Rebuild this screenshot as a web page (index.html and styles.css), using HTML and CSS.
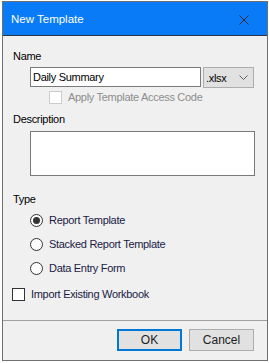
FILE: index.html
```html
<!DOCTYPE html>
<html>
<head>
    <title>New Template</title>
    <link rel="stylesheet" href="styles.css">
</head>
<body>
    <div class="window">
        <div class="titlebar">
            <span class="title">New Template</span>
            <svg class="close" width="10" height="10" viewBox="0 0 10 10">
                <path d="M0.5 0.5 L9.5 9.5 M9.5 0.5 L0.5 9.5" stroke="#1c2a3a" stroke-width="1" fill="none"/>
            </svg>
        </div>
        <div class="content">
            <div class="label">Name</div>
            <div class="nameRow">
                <div class="textbox">Daily Summary</div>
                <div class="combo">
                    <span>.xlsx</span>
                    <svg width="9" height="5" viewBox="0 0 9 5">
                        <path d="M0.5 0.5 L4.5 4.5 L8.5 0.5" stroke="#606060" stroke-width="1" fill="none"/>
                    </svg>
                </div>
            </div>
            <div class="checkRow accessRow disabled">
                <span class="check"></span>
                <span>Apply Template Access Code</span>
            </div>
            <div class="label descLabel">Description</div>
            <div class="textarea"></div>
            <div class="label typeLabel">Type</div>
            <div class="radios">
                <div class="radioRow"><span class="radio checked"></span><span>Report Template</span></div>
                <div class="radioRow"><span class="radio"></span><span>Stacked Report Template</span></div>
                <div class="radioRow"><span class="radio"></span><span>Data Entry Form</span></div>
            </div>
            <div class="checkRow importRow">
                <span class="check"></span>
                <span>Import Existing Workbook</span>
            </div>
        </div>
        <div class="footer">
            <div class="button default">OK</div>
            <div class="button">Cancel</div>
        </div>
    </div>
</body>
</html>
```

FILE: styles.css
```css
body {
    margin: 0;
    background: #ffffff;
    font-family: "Liberation Sans", Arial, sans-serif;
    font-size: 11px;
    letter-spacing: -0.3px;
    color: #000;
}
.window {
    margin: 1px 0 0 2px;
    width: 266px;
    height: 360px;
    box-sizing: border-box;
    border: 1px solid #707070;
    background: #f0f0f0;
    display: flex;
    flex-direction: column;
}
.titlebar {
    height: 33px;
    flex: none;
    border-bottom: 1px solid #2a3444;
    background: #0a7bf6;
    display: flex;
    align-items: center;
    justify-content: space-between;
    padding: 0 18px 0 8px;
}
.title {
    color: #fff;
    font-size: 11.5px;
    letter-spacing: 0;
}
.close {
    display: block;
    margin-top: 2px;
}
.content {
    flex: 1;
    padding: 14px 0 0 10px;
}
.label {
    line-height: 13px;
}
.nameRow {
    display: flex;
    margin: 4px 0 0 17px;
}
.textbox {
    width: 171px;
    height: 20px;
    box-sizing: border-box;
    border: 1px solid #7a7a7a;
    background: #fff;
    padding-left: 2px;
    line-height: 18px;
}
.combo {
    margin-left: 2px;
    width: 51px;
    height: 21px;
    box-sizing: border-box;
    border: 1px solid #adadad;
    background: #e1e1e1;
    display: flex;
    align-items: center;
    justify-content: space-between;
    padding: 0 5px 0 2px;
}
.combo svg {
    display: block;
}
.checkRow {
    display: flex;
    align-items: center;
    gap: 6px;
    line-height: 13px;
}
.check {
    width: 13px;
    height: 13px;
    box-sizing: border-box;
    border: 1px solid #333;
    background: #fff;
}
.accessRow {
    margin: 3px 0 0 36px;
}
.disabled {
    color: #8d8d8d;
}
.disabled .check {
    border-color: #cccccc;
}
.descLabel {
    margin-top: 9px;
}
.textarea {
    margin: 5px 0 0 17px;
    width: 225px;
    height: 45px;
    box-sizing: border-box;
    border: 1px solid #7a7a7a;
    background: #fff;
}
.typeLabel {
    margin-top: 17px;
}
.radios {
    margin: 8px 0 0 17px;
    display: flex;
    flex-direction: column;
    gap: 11px;
    color: #1a1a44;
}
.radioRow {
    display: flex;
    align-items: center;
    gap: 6px;
    line-height: 13px;
}
.radio {
    width: 13px;
    height: 13px;
    box-sizing: border-box;
    border: 1px solid #333;
    border-radius: 50%;
    background: #fff;
    display: flex;
    align-items: center;
    justify-content: center;
}
.radio.checked::after {
    content: "";
    width: 7px;
    height: 7px;
    border-radius: 50%;
    background: #333;
}
.importRow {
    margin: 13px 0 0 -1px;
    color: #1a1a44;
}
.footer {
    height: 31px;
    flex: none;
    border-top: 1px solid #a0a0a0;
    display: flex;
    justify-content: flex-end;
    align-items: flex-start;
    gap: 7px;
    padding: 8px 13px 0 0;
}
.button {
    width: 65px;
    height: 22px;
    box-sizing: border-box;
    border: 1px solid #adadad;
    background: #e1e1e1;
    text-align: center;
    line-height: 20px;
    font-size: 12px;
    letter-spacing: 0;
    color: #222;
}
.button.default {
    border: 2px solid #0078d7;
    line-height: 18px;
}
```
